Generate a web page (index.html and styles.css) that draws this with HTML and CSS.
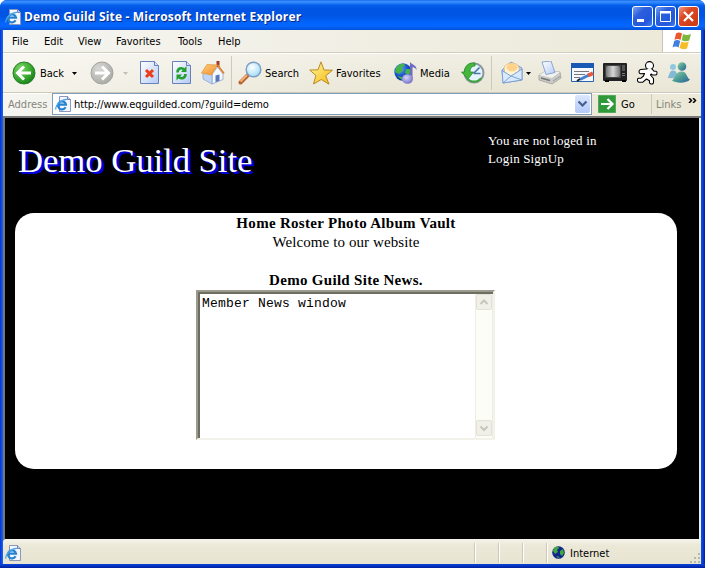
FILE: index.html
```
<!DOCTYPE html>
<html lang="en">
<head>
<meta charset="utf-8">
<title>Demo Guild Site</title>
<link rel="stylesheet" href="styles.css">
</head>
<body>
<svg class="defs" width="0" height="0">
  <defs>
    <linearGradient id="paper" x1="0" y1="0" x2="1" y2="1"><stop offset="0" stop-color="#fff"/><stop offset="1" stop-color="#b4cbf6"/></linearGradient>
    <radialGradient id="green" cx=".35" cy=".3" r=".8"><stop offset="0" stop-color="#7dd66a"/><stop offset=".6" stop-color="#36a72c"/><stop offset="1" stop-color="#16761a"/></radialGradient>
    <radialGradient id="grey" cx=".35" cy=".3" r=".8"><stop offset="0" stop-color="#d8d8d4"/><stop offset="1" stop-color="#a6a6a2"/></radialGradient>
    <radialGradient id="globe" cx=".35" cy=".3" r=".8"><stop offset="0" stop-color="#66a8ff"/><stop offset=".5" stop-color="#1c55cc"/><stop offset="1" stop-color="#0a1f70"/></radialGradient>
    <radialGradient id="lens" cx=".4" cy=".35" r=".7"><stop offset="0" stop-color="#fff"/><stop offset="1" stop-color="#9ddcf6"/></radialGradient>
    <linearGradient id="star" x1="0" y1="0" x2="1" y2="1"><stop offset="0" stop-color="#fff9a0"/><stop offset="1" stop-color="#f7b50c"/></linearGradient>
    <linearGradient id="roof" x1="0" y1="0" x2="1" y2="1"><stop offset="0" stop-color="#ffd080"/><stop offset="1" stop-color="#f08a28"/></linearGradient>
    <radialGradient id="note" cx=".4" cy=".35" r=".7"><stop offset="0" stop-color="#d6d4fb"/><stop offset="1" stop-color="#6f6bc4"/></radialGradient>
    <linearGradient id="body1" x1="0" y1="0" x2="1" y2="1"><stop offset="0" stop-color="#9bd0a8"/><stop offset=".5" stop-color="#4c9c94"/><stop offset="1" stop-color="#2a5f9e"/></linearGradient>
    <linearGradient id="screen" x1="0" y1="0" x2="1" y2="0"><stop offset="0" stop-color="#777"/><stop offset=".5" stop-color="#d8d8d8"/><stop offset="1" stop-color="#777"/></linearGradient>
    <symbol id="ie" viewBox="0 0 16 16">
      <path d="M4.500.5h8l3 3v12h-11z" fill="#f4f7ff" stroke="#8b98bd"/>
      <path d="M12.500.5v3h3" fill="#c5d0ee" stroke="#7080b0"/>
      <path d="M10.600 11.200A4 4 0 1 1 11 8.700H4" fill="none" stroke="#2583d0" stroke-width="2.200"/>
      <path d="M1 13.500C-.5 10 6 3 12 3.300" fill="none" stroke="#4ba5e6" stroke-width="1.200"/>
    </symbol>
  </defs>
</svg>
<div class="window">
  <header class="titlebar">
    <svg class="title-icon" width="16" height="16"><use href="#ie"/></svg>
    <span class="title">Demo Guild Site - Microsoft Internet Explorer</span>
    <span class="win-btn"><svg width="19" height="19"><path d="M4 12h7v3H4z" fill="#fff"/></svg></span>
    <span class="win-btn"><svg width="19" height="19"><path d="M4.500 5h10v9.500h-10z" fill="none" stroke="#fff"/><path d="M4 4h11v2.500H4z" fill="#fff"/></svg></span>
    <span class="win-btn close"><svg width="19" height="19"><path d="M5 5l9 9M14 5l-9 9" stroke="#fff" stroke-width="2.200"/></svg></span>
  </header>

  <nav class="menubar">
    <span class="m-file">File</span><span class="m-edit">Edit</span><span class="m-view">View</span><span class="m-fav">Favorites</span><span class="m-tools">Tools</span><span class="m-help">Help</span>
    <div class="flag">
      <svg width="20" height="18" viewBox="0 0 20 18">
        <path d="M4 1.500c2-1.500 4-1.200 6 0L8.500 8c-2-1.200-4-1.200-6 0z" fill="#e8582c"/>
        <path d="M11 2c2.500 1.300 5 1.300 8 0l-1.800 6.500c-2.500 1-5 1-7.500-.2z" fill="#7cb83c"/>
        <path d="M2.200 9c2-1.200 4-1.200 6 0l-1.600 6.500c-2-1.200-4-1.200-6 0z" fill="#3f7fe0"/>
        <path d="M9.300 9.500c2.500 1.200 5 1.200 7.500.2L15 16.500c-2.500 1-5 .8-7.500-.4z" fill="#f6bd26"/>
      </svg>
    </div>
  </nav>

  <div class="toolbar">
    <svg class="t-back" width="24" height="24"><circle cx="12" cy="12" r="11" fill="url(#green)" stroke="#28802a"/><path d="M19 12H6M12 5.500L5.500 12l6.500 6.500" fill="none" stroke="#fff" stroke-width="3"/></svg>
    <span class="l-back">Back</span>
    <svg class="a-back" width="5" height="3"><path d="M0 0h5L2.500 3z"/></svg>
    <svg class="t-fwd" width="24" height="24"><circle cx="12" cy="12" r="11" fill="url(#grey)" stroke="#a3a39f"/><path d="M5 12h13M12 5.500l6.500 6.500-6.500 6.500" fill="none" stroke="#fff" stroke-width="3"/></svg>
    <svg class="a-fwd" width="5" height="3"><path d="M0 0h5L2.500 3z" fill="#c0bfb4"/></svg>
    <svg class="t-stop" width="20" height="24"><path d="M.5.500h14l4 4v18H.5z" fill="url(#paper)" stroke="#6781bd"/><path d="M14.500.5v4h4" fill="#d5e2fb" stroke="#6781bd"/><path d="M6 9l7 7M13 9l-7 7" stroke="#ee3b18" stroke-width="3"/></svg>
    <svg class="t-refresh" width="20" height="24"><path d="M.5.500h14l4 4v18H.5z" fill="url(#paper)" stroke="#6781bd"/><path d="M14.500.5v4h4" fill="#d5e2fb" stroke="#6781bd"/><path d="M5.500 11.500c0-4 4-5.500 6.500-3M13.500 13c0 4-4 5.500-6.500 3" fill="none" stroke="#22a02f" stroke-width="2.600"/><path d="M14.500 5v6H9zM4.500 19.500v-6H10z" fill="#22a02f"/></svg>
    <svg class="t-home" width="24" height="24">
      <path d="M11 13l5.500-7 5.500 7v5.500L11 23z" fill="#f4f8ff" stroke="#90a5cc" stroke-width=".8"/>
      <path d="M2 11l9 2v10l-9-5z" fill="#bfd5f8" stroke="#90a5cc" stroke-width=".8"/>
      <path d="M15.500 0h3v6h-3z" fill="#a03a28"/>
      <path d="M.5 12L6 3.500 16.500 4 10.500 14z" fill="url(#roof)" stroke="#e09036" stroke-width=".7"/>
      <path d="M16.500 4L23 12.500" stroke="#dc842c" stroke-width="1.800"/>
      <path d="M14.500 14.500l4-1v6.200l-4 1.600z" fill="#5578b8"/>
    </svg>
    <i class="sep s1"></i>
    <svg class="t-search" width="25" height="24"><path d="M9.500 14.500L2.500 21.500" stroke="#b66632" stroke-width="4" stroke-linecap="round"/><path d="M9 14L2.500 20.500" stroke="#f3b277" stroke-width="2"/><circle cx="15.500" cy="8.500" r="7.300" fill="url(#lens)" stroke="#7d9ec7" stroke-width="1.500"/></svg>
    <span class="l-search">Search</span>
    <svg class="t-star" width="24" height="24"><path d="M12 .8l3 8.200 8.500.2-6.800 5.600 3.300 8.400-7.700-4.700L4.500 23l2.400-8.500L.7 9l8.300-.2z" fill="url(#star)" stroke="#b88b26"/></svg>
    <span class="l-fav">Favorites</span>
    <svg class="t-media" width="24" height="24"><circle cx="9" cy="11" r="8.700" fill="url(#globe)"/><path d="M2 7c3-5 8-5 9-3L8 7l1 3-4 3-4-2zM12 8l4 0 1 4-3 2-3-2zM3 15l5 1v3z" fill="#45b34a"/><path d="M16 1c2 3 7 3 6.500 8-1-2-3-3-4-2.500V17h-2.500z" fill="#6f6bc4"/><ellipse cx="13.500" cy="18" rx="5.500" ry="4.800" fill="url(#note)"/></svg>
    <span class="l-media">Media</span>
    <svg class="t-history" width="24" height="24"><circle cx="13" cy="12" r="9.500" fill="#e5f3ff" stroke="#87989c" stroke-width="2"/><path d="M12.500 12.500l6-6M12.500 12.500h7" stroke="#4b78aa" stroke-width="1.700"/><path d="M14 2C7 1 3.500 6 3.500 11H.5l6.500 7 5.500-7H9c0-4 2-6 5-6z" fill="#45b83b" stroke="#248b2b" stroke-width=".8"/><path d="M6 17c4 5 11 4.500 14 0" fill="none" stroke="#3aa636" stroke-width="2"/></svg>
    <i class="sep s2"></i>
    <svg class="t-mail" width="22" height="24"><path d="M1 9l9-8 11 6v12L2 22z" fill="#b5d2f6" stroke="#7da0d4"/><path d="M3 7c1-6 14-7 15 0v5l-7 4-7-3z" fill="#fff4d5" stroke="#ddb06a" stroke-width=".7"/><ellipse cx="11" cy="6.500" rx="5.500" ry="4" fill="#ffd28a"/><path d="M1 9.500L10 15l11-7v11L2 22z" fill="#d9eaff" stroke="#7da0d4"/><path d="M2 22l8-7 11 4" fill="none" stroke="#7da0d4"/></svg>
    <svg class="a-mail" width="5" height="3"><path d="M0 0h5L2.500 3z"/></svg>
    <svg class="t-print" width="24" height="24"><path d="M1 14l7-4 14 1 1 6-9 6-13-4z" fill="#c9c9c6" stroke="#9a9a9a" stroke-width=".7"/><path d="M1 14l7-4 14 1-8 6z" fill="#f1f1ee"/><path d="M4 1l9-1 4 11.500-9 2z" fill="url(#paper)" stroke="#8fa5ce"/><path d="M3 17l9 2.500" stroke="#777" stroke-width="1.500"/><path d="M15 20l7-4.500" stroke="#999"/></svg>
    <svg class="t-edit" width="24" height="21"><path d="M.5.500h22v18H.5z" fill="#f4f8ff" stroke="#2563ae"/><path d="M0 0h23v5H0z" fill="#1958b5"/><path d="M3 8.500h15M3 11.500h11M3 14.500h6" stroke="#777"/><path d="M9 16.500l9-4.500" stroke="#4380d5" stroke-width="3"/><path d="M17 12.500l5-2.300" stroke="#e75a3b" stroke-width="4"/><path d="M6 18l3-2" stroke="#222" stroke-width="2"/></svg>
    <svg class="t-tv" width="25" height="20"><rect width="24" height="18" rx="1" fill="#222"/><path d="M2 2h16v13H2z" fill="#444"/><rect x="3" y="3" width="14" height="11" rx="2" fill="url(#screen)"/><path d="M19 2h3v6h-3z" fill="#555"/><path d="M19 10.500h3M19 12.500h3" stroke="#777"/><path d="M2 17h4v2H2zM19 17h4v2h-4z"/></svg>
    <svg class="t-aim" width="21" height="24"><path d="M9.500 8L3.500 8.500c-2 .5-2 4 0 4.300l4-.3L6.500 15 4 17.200H1.500c-1.800.6-1.300 3.800.5 4h3.800L9.500 18l3 1.800v2c.8 1.800 4.200 1.400 4-.4V17.500l-3-3.500.5-1 1.500 1h3.500c1.500-.8 1.300-3.500 0-3.800H17L15 8z" fill="#fff" stroke="#000" stroke-width="1.100" stroke-linejoin="round"/><circle cx="12.500" cy="4.600" r="4" fill="#fff" stroke="#000" stroke-width="1.100"/><path d="M10.300 8.600h4.200" stroke="#fff" stroke-width="1.400"/></svg>
    <svg class="t-msn" width="25" height="24"><circle cx="7" cy="6" r="3" fill="#8fc8e0"/><path d="M1.500 17C3 16 3 9.500 7 9.500s4 4 5 8z" fill="#82b9d7"/><circle cx="16" cy="5.500" r="4.300" fill="url(#body1)"/><path d="M6 19.500c3-1 3-9 9.500-9 6 0 5 7 8.500 8-3 4-14 4-18 1z" fill="url(#body1)"/></svg>
  </div>

  <div class="addressbar">
    <span class="address-label">Address</span>
    <div class="address-field">
      <svg width="16" height="16"><use href="#ie"/></svg>
      <span class="url">http://www.eqguilded.com/?guild=demo</span>
      <span class="drop"><svg width="15" height="17"><path d="M3.500 6.500l4 4 4-4" fill="none" stroke="#455e8c" stroke-width="2.200"/></svg></span>
    </div>
    <svg class="go-icon" width="18" height="18"><rect width="18" height="18" rx="2" fill="#2f9838"/><path d="M.5.500h17v17H.5z" fill="none" stroke="#55ab5b"/><path d="M3 9h11M9.500 4l5 5-5 5" fill="none" stroke="#fff" stroke-width="2.200"/></svg>
    <span class="go">Go</span>
    <span class="links">Links</span>
    <svg class="chevrons" width="9" height="5"><path d="M1 0l2.500 2.500L1 5M5 0l2.500 2.500L5 5" fill="none" stroke="#000" stroke-width="1.500"/></svg>
  </div>

  <main class="page">
    <div class="page-head">
      <h1>Demo Guild Site</h1>
      <div class="login">You are not loged in<br>Login SignUp</div>
    </div>
    <section class="panel">
      <div class="nav-links">Home Roster Photo Album Vault</div>
      <div class="welcome">Welcome to our website</div>
      <div class="news-title">Demo Guild Site News.</div>
      <div class="news">
        <div class="news-text">Member News window</div>
        <div class="scrollbar">
          <span><svg width="14" height="14"><path d="M3.500 9L7 5.500 10.500 9" fill="none" stroke="#c6c6ba" stroke-width="2"/></svg></span>
          <span><svg width="14" height="14"><path d="M3.500 5.500L7 9l3.500-3.500" fill="none" stroke="#c6c6ba" stroke-width="2"/></svg></span>
        </div>
      </div>
    </section>
  </main>

  <footer class="status">
    <svg class="status-icon" width="16" height="16"><use href="#ie"/></svg>
    <i></i><i></i><i></i>
    <div class="zone">
      <svg width="13" height="13"><circle cx="6.500" cy="6.500" r="6.300" fill="#10268c"/><path d="M2 2c3-2 5-1 5 0L5 4l1 2-3 2-2-3zM8 5l3-2 1 4-2 3-2-2zM4 10l4 1-2 1z" fill="#3fa83e"/></svg>
      <span>Internet</span>
    </div>
    <svg class="grip" width="12" height="12"><path d="M9 1h2v2H9zM5 5h2v2H5zM9 5h2v2H9zM1 9h2v2H1zM5 9h2v2H5zM9 9h2v2H9z" fill="#bab7a6"/></svg>
  </footer>
</div>
</body>
</html>
```
FILE: styles.css
```
* { box-sizing: border-box; }
body { margin: 0; background: #fff; overflow: hidden; }
svg { display: block; flex: none; }
.defs { position: absolute; }

.window {
  width: 705px; height: 568px; overflow: hidden;
  display: grid; grid-template-rows: 30px 23px 40px 25px 423px 23px;
  padding: 0 4px 4px 3px;
  border-radius: 7px 7px 0 0;
  background:
    linear-gradient(#0b46dc, #001ea0) bottom / 100% 4px no-repeat,
    linear-gradient(90deg, #0831d9, #166aee 3px, #0855dd 4px, #0855dd 701px, #0c4be0 702px, #001ea0 705px);
  font: 11px "DejaVu Sans Condensed", "DejaVu Sans", sans-serif;
  color: #000;
}
.titlebar {
  display: flex; align-items: center; margin: 0 -4px 0 -3px; padding: 3px 6px 0 5px;
  background: linear-gradient(#0a5be0 0, #3c91ff 1px, #2a82fb 3px, #0660ea 5px, #0054e3 9px, #0055e5 16px, #0264fb 23px, #0366ff 26px, #0450d8 30px);
}
.title {
  flex: 1; margin-left: 3px; color: #fff; white-space: nowrap;
  font: bold 12px/20px "Open Sans", sans-serif; letter-spacing: .18px;
  text-shadow: 1px 1px #0b2a83;
}
.win-btn {
  width: 21px; height: 21px; margin-left: 2px; border: 1px solid #fff; border-radius: 3px;
  background: linear-gradient(135deg, #7ba2ee, #2b5fdc 35%, #2358dc 75%, #4a7ff0);
}
.close { background: linear-gradient(135deg, #f09a80, #dc4a25 35%, #cf3d18 80%); }

.menubar {
  display: flex; align-items: center; padding-left: 9px;
  background: linear-gradient(90deg, #f5f5f1, #ece9d8); border-bottom: 1px solid #d0cdbd;
}
.menubar span { white-space: nowrap; }
.m-file { width: 32px; }
.m-edit { width: 34px; }
.m-view { width: 38px; }
.m-fav { width: 62px; }
.m-tools { width: 40px; }
.flag { margin-left: auto; width: 39px; height: 22px; background: #fff; border-left: 1px solid #c9c6b6; padding: 2px 0 0 9px; }

.toolbar {
  display: flex; align-items: center; padding-left: 9px;
  background: linear-gradient(90deg, rgba(255,255,255,.5), transparent 60%), linear-gradient(#f1efe4, #e9e6d5);
  border-top: 1px solid #fff; border-bottom: 1px solid #cdcabb;
}
.toolbar span { white-space: nowrap; flex: none; }
.l-back { width: 27px; margin-left: 4px; }
.a-back { margin-left: 5px; }
.t-fwd { margin-left: 13px; }
.a-fwd { margin-left: 9px; }
.t-stop { margin-left: 12px; }
.t-refresh { margin-left: 12px; }
.t-home { margin-left: 9px; }
.sep { flex: none; width: 1px; height: 34px; background: #cdcabb; }
.s1 { margin-left: 6px; }
.t-search { margin-left: 6px; }
.l-search { margin-left: 2px; width: 44px; }
.l-fav { margin-left: 3px; width: 58px; }
.l-media { margin-left: 2px; width: 40px; }
.t-history { margin-left: 1px; }
.s2 { margin-left: 6px; }
.t-mail { margin-left: 9px; }
.a-mail { margin-left: 3px; }
.t-print { margin-left: 7px; }
.t-edit { margin-left: 9px; }
.t-tv { margin-left: 8px; }
.t-aim { margin-left: 9px; }
.t-msn { margin-left: 8px; }

.addressbar {
  display: flex; align-items: center; padding: 0 4px 2px 5px;
  background: linear-gradient(90deg, #f5f5f1, #ece9d8 60%);
  border-bottom: 2px solid #777; border-top: 1px solid #fff;
}
.address-label { width: 44px; color: #86847a; }
.address-field {
  width: 540px; height: 22px; display: flex; align-items: center; padding: 0 1px 0 2px;
  background: #fff; border: 1px solid #7f9db9;
}
.url { margin-left: 3px; white-space: nowrap; flex: 1; letter-spacing: -.13px; }
.drop { width: 15px; height: 18px; border-radius: 2px; background: linear-gradient(#dce7ff, #b3c9f8); }
.go-icon { margin-left: 6px; }
.go { margin-left: 5px; width: 30px; }
.links { width: 37px; height: 20px; line-height: 22px; padding-left: 4px; border-left: 1px solid #cdcabb; color: #86847a; }
.chevrons { margin: -7px 0 0 auto; }

.page { background: #000; border: solid #777; border-width: 0 2px 2px; border-bottom-color: #f4f2e8; border-right-color: #f1efe6; color: #fff; font-family: "Liberation Serif", serif; }
.page-head { display: flex; height: 95px; }
h1 {
  margin: 23px 0 0 13px; width: 470px; font-weight: 400; font-size: 34.7px; line-height: 40px;
  text-shadow: 3px 2px #0000d8, 2px 1px #0000d8; white-space: nowrap; letter-spacing: -.05px;
}
.login { margin-top: 14px; font-size: 13px; line-height: 18px; letter-spacing: .15px; }
.panel {
  width: 662px; height: 256px; margin-left: 10px; border-radius: 19px; background: #fff; color: #000;
  font-size: 15px; line-height: 19px; text-align: center; padding-top: 1px;
}
.nav-links, .news-title { font-weight: bold; letter-spacing: .3px; }
.welcome { letter-spacing: .1px; }
.news-title { margin-top: 19px; }
.news {
  width: 299px; height: 150px; margin: 0 auto 0 181px; display: flex;
  border: 2px solid; border-color: #9c9c8e #f3f2ea #f3f2ea #9c9c8e;
  box-shadow: inset 2px 2px #6d6d62; padding: 2px 0 0 2px;
}
.news-text { flex: 1; padding: 2px 0 0 2px; text-align: left; font: 13px/16px "Liberation Mono", monospace; letter-spacing: .2px; }
.scrollbar { width: 18px; display: flex; flex-direction: column; justify-content: space-between; background: #fdfdf8; border-left: 1px solid #eeede5; border-right: 1px solid #eeede5; padding: 0 0 2px; }
.scrollbar span { width: 16px; height: 16px; border: 1px solid #e3e2d9; border-radius: 2px; background: #f0efe8; }

.status { display: flex; align-items: center; padding-left: 2px; background: linear-gradient(#f2f0e5, #ebe8d7 5px, #e7e4d2); }
.status-icon { margin-right: auto; }
.status i { width: 24px; height: 20px; border-left: 1px solid #cbc8b8; box-shadow: inset 1px 0 #fff; }
.zone { width: 143px; height: 20px; display: flex; align-items: center; padding-left: 5px; border-left: 1px solid #cbc8b8; box-shadow: inset 1px 0 #fff; }
.zone span { margin: 2px 0 0 5px; }
.grip { align-self: flex-end; }
```
